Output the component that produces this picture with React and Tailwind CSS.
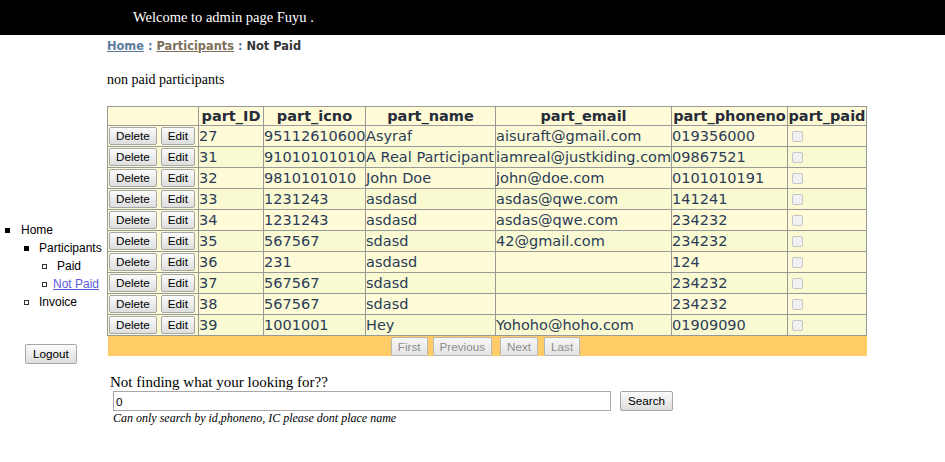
import React from 'react';

const rows = [
  { id: '27', icno: '95112610600', name: 'Asyraf', email: 'aisuraft@gmail.com', phone: '019356000' },
  { id: '31', icno: '91010101010', name: 'A Real Participant', email: 'iamreal@justkiding.com', phone: '09867521' },
  { id: '32', icno: '9810101010', name: 'John Doe', email: 'john@doe.com', phone: '0101010191' },
  { id: '33', icno: '1231243', name: 'asdasd', email: 'asdas@qwe.com', phone: '141241' },
  { id: '34', icno: '1231243', name: 'asdasd', email: 'asdas@qwe.com', phone: '234232' },
  { id: '35', icno: '567567', name: 'sdasd', email: '42@gmail.com', phone: '234232' },
  { id: '36', icno: '231', name: 'asdasd', email: '', phone: '124' },
  { id: '37', icno: '567567', name: 'sdasd', email: '', phone: '234232' },
  { id: '38', icno: '567567', name: 'sdasd', email: '', phone: '234232' },
  { id: '39', icno: '1001001', name: 'Hey', email: 'Yohoho@hoho.com', phone: '01909090' },
];

const btn =
  "h-[18px] px-[6px] border border-[#a6a6a6] rounded-[2px] bg-gradient-to-b from-[#fbfbfb] to-[#dedede] text-[11.7px] leading-none text-black font-['Liberation_Sans',Arial,sans-serif]";

const pagerBtn =
  "h-[19px] px-[6px] border border-[#b8b8b8] rounded-[2px] bg-gradient-to-b from-[#f6f6f6] to-[#e6e6e6] text-[11.7px] leading-none text-[#8e8e8e] font-['Liberation_Sans',Arial,sans-serif]";

const Bullet = ({ filled }) => (
  <span
    className={`inline-block w-[5px] h-[5px] ${filled ? 'bg-black' : 'border border-[#333] bg-white'}`}
  />
);

const App = () => {
  return (
    <div className="min-h-screen bg-white font-['Liberation_Serif',serif] text-black">
      {/* barra superior */}
      <div className="h-[35px] bg-black flex items-center pl-[133px] text-white text-[14.5px]">
        Welcome to admin page Fuyu .
      </div>

      <div className="flex">
        {/* menu lateral */}
        <aside className="w-[107px] shrink-0 pt-[186px] font-['Liberation_Sans',Arial,sans-serif] text-[12px]">
          <ul>
            <li className="h-[18px] flex items-center pl-[5px]">
              <Bullet filled />
              <span className="ml-[11px]">Home</span>
            </li>
            <li className="h-[18px] flex items-center pl-[24px]">
              <Bullet filled />
              <span className="ml-[10px]">Participants</span>
            </li>
            <li className="h-[18px] flex items-center pl-[42px]">
              <Bullet />
              <span className="ml-[10px]">Paid</span>
            </li>
            <li className="h-[18px] flex items-center pl-[42px]">
              <Bullet />
              <span className="ml-[6px] text-[#5c5ce0] underline">Not Paid</span>
            </li>
            <li className="h-[18px] flex items-center pl-[24px]">
              <Bullet />
              <span className="ml-[10px]">Invoice</span>
            </li>
          </ul>
          <button className={`${btn} ml-[25px] mt-[33px] h-[20px] px-[7px]`}>Logout</button>
        </aside>

        {/* contenido */}
        <main className="pt-[3px]">
          <div className="h-[16px] leading-[16px] font-['DejaVu_Sans',Verdana,sans-serif] text-[11.4px] font-bold">
            <span className="text-[#5D7B9D] underline">Home</span>
            <span className="text-[#5D7B9D]"> : </span>
            <span className="text-[#7C6F57] underline">Participants</span>
            <span className="text-[#5D7B9D]"> : </span>
            <span className="text-[#333333]">Not Paid</span>
          </div>
          <p className="mt-[18px] h-[16px] leading-[16px] text-[14px]">non paid participants</p>

          <table className="mt-[18px] table-fixed border-collapse w-[759px] font-['DejaVu_Sans',Verdana,sans-serif] text-[14.5px]">
            <colgroup>
              <col className="w-[91px]" />
              <col className="w-[65px]" />
              <col className="w-[102px]" />
              <col className="w-[130px]" />
              <col className="w-[176px]" />
              <col className="w-[116px]" />
              <col className="w-[79px]" />
            </colgroup>
            <thead>
              <tr className="h-[19px] bg-[#FFFBD6] text-[#262c3a]">
                <th className="border border-[#999] p-0"></th>
                <th className="border border-[#999] p-0 leading-none whitespace-nowrap">part_ID</th>
                <th className="border border-[#999] p-0 leading-none whitespace-nowrap">part_icno</th>
                <th className="border border-[#999] p-0 leading-none whitespace-nowrap">part_name</th>
                <th className="border border-[#999] p-0 leading-none whitespace-nowrap">part_email</th>
                <th className="border border-[#999] p-0 leading-none whitespace-nowrap">part_phoneno</th>
                <th className="border border-[#999] p-0 leading-none whitespace-nowrap">part_paid</th>
              </tr>
            </thead>
            <tbody>
              {rows.map((r, i) => (
                <tr
                  key={r.id}
                  className={`h-[21px] text-[#2b3c58] ${i % 2 === 0 ? 'bg-[#FFFBD6]' : 'bg-[#FAFAD2]'}`}
                >
                  <td className="border border-[#999] p-0">
                    <div className="flex items-center gap-[4px] pl-[1px]">
                      <button className={btn}>Delete</button>
                      <button className={btn}>Edit</button>
                    </div>
                  </td>
                  <td className="border border-[#999] p-0 leading-none whitespace-nowrap">{r.id}</td>
                  <td className="border border-[#999] p-0 leading-none whitespace-nowrap">{r.icno}</td>
                  <td className="border border-[#999] p-0 leading-none whitespace-nowrap">{r.name}</td>
                  <td className="border border-[#999] p-0 leading-none whitespace-nowrap">{r.email}</td>
                  <td className="border border-[#999] p-0 leading-none whitespace-nowrap">{r.phone}</td>
                  <td className="border border-[#999] p-0">
                    <span className="block ml-[4px] w-[11px] h-[11px] rounded-[2px] border border-[#c6c6c6] bg-[#f1f1f1]" />
                  </td>
                </tr>
              ))}
              <tr className="h-[20px] bg-[#FFCC66]">
                <td colSpan={7} className="p-0">
                  <div className="flex justify-center items-start pt-[1px] h-[20px] pr-[3px]">
                    <button className={pagerBtn}>First</button>
                    <button className={`${pagerBtn} ml-[5px]`}>Previous</button>
                    <button className={`${pagerBtn} ml-[8px]`}>Next</button>
                    <button className={`${pagerBtn} ml-[6px]`}>Last</button>
                  </div>
                </td>
              </tr>
            </tbody>
          </table>

          {/* buscador */}
          <div className="mt-[18px] pl-[3px]">
            <p className="h-[17px] leading-[17px] text-[15px]">Not finding what your looking for??</p>
            <div className="flex items-start pl-[3px]">
              <input
                type="text"
                defaultValue="0"
                className="w-[498px] h-[20px] border border-[#a9a9a9] px-[2px] text-[11.7px] font-['Liberation_Sans',Arial,sans-serif] outline-none"
              />
              <button className={`${btn} ml-[9px] h-[20px] px-[7px]`}>Search</button>
            </div>
            <p className="pl-[3px] h-[14px] leading-[14px] text-[12px] italic">
              Can only search by id,phoneno, IC please dont place name
            </p>
          </div>
        </main>
      </div>
    </div>
  );
};

export default App;
